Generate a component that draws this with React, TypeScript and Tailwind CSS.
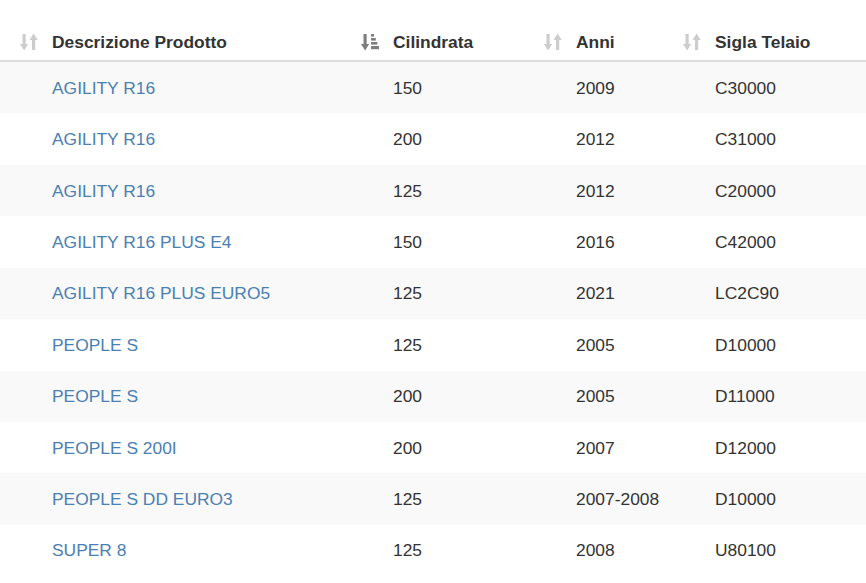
import React from "react";

const rows: [string, string, string, string][] = [
  ["AGILITY R16", "150", "2009", "C30000"],
  ["AGILITY R16", "200", "2012", "C31000"],
  ["AGILITY R16", "125", "2012", "C20000"],
  ["AGILITY R16 PLUS E4", "150", "2016", "C42000"],
  ["AGILITY R16 PLUS EURO5", "125", "2021", "LC2C90"],
  ["PEOPLE S", "125", "2005", "D10000"],
  ["PEOPLE S", "200", "2005", "D11000"],
  ["PEOPLE S 200I", "200", "2007", "D12000"],
  ["PEOPLE S DD EURO3", "125", "2007-2008", "D10000"],
  ["SUPER 8", "125", "2008", "U80100"],
];

function SortIcon() {
  return (
    <svg width="18" height="18" viewBox="0 0 18 18" fill="#cdcdcd">
      <rect x="2.5" y="1" width="3.2" height="11" />
      <polygon points="0,11 8.2,11 4.1,17.5" />
      <polygon points="9.5,7 17.7,7 13.6,0.5" />
      <rect x="12" y="6" width="3.2" height="11" />
    </svg>
  );
}

function SortAttrIcon() {
  return (
    <svg width="18" height="18" viewBox="0 0 18 18" fill="#7f7f7f">
      <rect x="2.5" y="1" width="3.2" height="11" />
      <polygon points="0,11 8.2,11 4.1,17.5" />
      <rect x="10" y="1" width="3" height="2.6" />
      <rect x="10" y="5" width="4.8" height="2.6" />
      <rect x="10" y="9" width="6.4" height="2.6" />
      <rect x="10" y="13" width="8" height="3.2" />
    </svg>
  );
}

const cols = ["w-[341px]", "w-[183px]", "w-[139px]", "flex-1"];

export default function App() {
  return (
    <div
      className="w-[866px] h-[583px] overflow-hidden bg-white text-[#333] text-[17.4px]"
      style={{ fontFamily: '"Liberation Sans", Arial, sans-serif' }}
    >
      <div className="mt-[24px] flex h-[36px] items-center font-bold border-b-2 border-[#dddddd] box-content">
        {["Descrizione Prodotto", "Cilindrata", "Anni", "Sigla Telaio"].map((h, i) => (
          <div key={h} className={`${cols[i]} relative flex items-center h-full pl-[52px]`}>
            <span className="absolute left-[20px] top-[9px] flex">
              {i === 1 ? <SortAttrIcon /> : <SortIcon />}
            </span>
            {h}
          </div>
        ))}
      </div>
      {rows.map((r, idx) => (
        <div
          key={idx}
          className={`flex h-[51.43px] items-center ${idx % 2 === 0 ? "bg-[#f9f9f9]" : "bg-white"}`}
        >
          <div className={`${cols[0]} pl-[52px] text-[#4a80b2]`}>{r[0]}</div>
          <div className={`${cols[1]} pl-[52px]`}>{r[1]}</div>
          <div className={`${cols[2]} pl-[52px]`}>{r[2]}</div>
          <div className={`${cols[3]} pl-[52px]`}>{r[3]}</div>
        </div>
      ))}
    </div>
  );
}
